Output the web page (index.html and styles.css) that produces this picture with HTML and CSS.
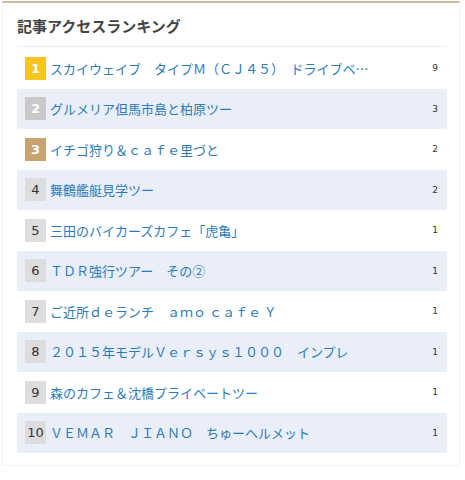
FILE: index.html
```html
<!DOCTYPE html>
<html lang="ja">
<head>
<meta charset="utf-8">
<link rel="stylesheet" href="styles.css">
</head>
<body>
<div class="panel">
  <h2 class="title">記事アクセスランキング</h2>
  <ul class="rank">
    <li class="row"><span class="badge b1">1</span><a class="name">スカイウェイブ　タイプＭ（ＣＪ４５）　ドライブベ…</a><span class="cnt">9</span></li>
    <li class="row alt"><span class="badge b2">2</span><a class="name">グルメリア但馬市島と柏原ツー</a><span class="cnt">3</span></li>
    <li class="row"><span class="badge b3">3</span><a class="name">イチゴ狩り＆ｃａｆｅ里づと</a><span class="cnt">2</span></li>
    <li class="row alt"><span class="badge">4</span><a class="name">舞鶴艦艇見学ツー</a><span class="cnt">2</span></li>
    <li class="row"><span class="badge">5</span><a class="name">三田のバイカーズカフェ「虎亀」</a><span class="cnt">1</span></li>
    <li class="row alt"><span class="badge">6</span><a class="name">ＴＤＲ強行ツアー　その②</a><span class="cnt">1</span></li>
    <li class="row"><span class="badge">7</span><a class="name">ご近所ｄｅランチ　ａｍｏ ｃａｆｅ Ｙ</a><span class="cnt">1</span></li>
    <li class="row alt"><span class="badge">8</span><a class="name">２０１５年モデルＶｅｒｓｙｓ１０００　インプレ</a><span class="cnt">1</span></li>
    <li class="row"><span class="badge">9</span><a class="name">森のカフェ＆沈橋プライベートツー</a><span class="cnt">1</span></li>
    <li class="row alt"><span class="badge">10</span><a class="name">ＶＥＭＡＲ　ＪＩＡＮＯ　ちゅーヘルメット</a><span class="cnt">1</span></li>
  </ul>
</div>
</body>
</html>
```

FILE: styles.css
```css
html, body {
  margin: 0;
  padding: 0;
  background: #ffffff;
}
body {
  font-family: "Noto Sans CJK JP", "Noto Sans", sans-serif;
}
.panel {
  margin: 1px 5px 0 2px;
  border-top: 2px solid #cfbb9f;
  border-left: 1px solid #f2f2f2;
  border-right: 1px solid #f2f2f2;
  border-bottom: 1px solid #f2f2f2;
  padding: 13px 12px 12px 14px;
}
.title {
  margin: 0;
  font-size: 15px;
  line-height: 20px;
  font-weight: bold;
  color: #444444;
  padding-bottom: 10px;
  border-bottom: 1px solid #eeeeee;
}
.rank {
  list-style: none;
  margin: 1px 0 0 0;
  padding: 0;
}
.row {
  display: flex;
  align-items: center;
  height: 40.5px;
  padding-left: 8px;
  padding-right: 9px;
}
.row.alt {
  background: #e9eef9;
}
.badge {
  flex: none;
  width: 21px;
  height: 23px;
  line-height: 23px;
  text-align: center;
  font-family: "DejaVu Sans", sans-serif;
  font-size: 13px;
  color: #333333;
  background: #dddddd;
  margin-right: 4px;
}
.badge.b1 {
  background: #f6c520;
  color: #ffffff;
  font-weight: bold;
}
.badge.b2 {
  background: #c9c9c9;
  color: #ffffff;
  font-weight: bold;
}
.badge.b3 {
  background: #c9a270;
  color: #ffffff;
  font-weight: bold;
}
.name {
  flex: 1;
  min-width: 0;
  font-size: 13px;
  color: #2b7bb9;
  white-space: nowrap;
  margin-right: 12px;
}
.cnt {
  flex: none;
  width: 40px;
  text-align: right;
  font-family: "DejaVu Sans", sans-serif;
  font-size: 9px;
  color: #333333;
}
```
